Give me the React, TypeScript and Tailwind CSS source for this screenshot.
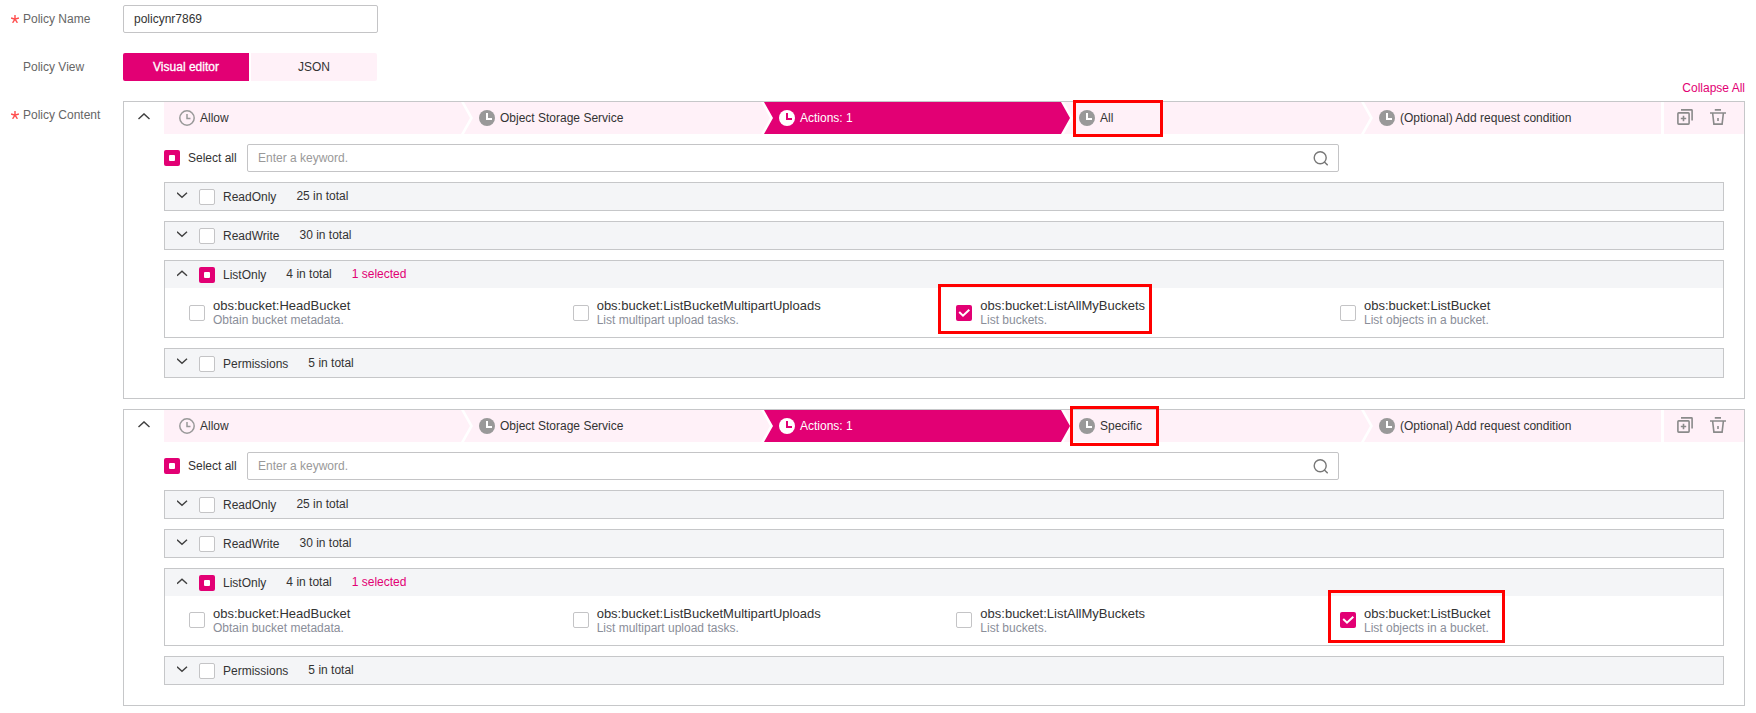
import type { ReactNode } from "react";

type Step = { label: string; variant: "outline" | "solid" | "active" };

function ClockOutline() {
  return (
    <svg className="size-4 shrink-0" viewBox="0 0 16 16" fill="none" stroke="#999" strokeWidth="1.5">
      <circle cx="8" cy="8" r="7.2" />
      <path d="M8 4v4.5h3.5" />
    </svg>
  );
}

function ClockSolid({ active }: { active: boolean }) {
  return (
    <svg className="size-4 shrink-0" viewBox="0 0 16 16" fill="none">
      <circle cx="8" cy="8" r="8" fill={active ? "#fff" : "#999"} />
      <path d="M8 3v6h5" stroke={active ? "#e20074" : "#fff"} strokeWidth="2" />
    </svg>
  );
}

function Chevron({ up = false, wide = false }: { up?: boolean; wide?: boolean }) {
  return (
    <svg
      className={wide ? "h-[7px] w-3 shrink-0" : "h-[7px] w-[11px] shrink-0"}
      viewBox={wide ? "0 0 12 7" : "0 0 11 7"}
      fill="none"
      stroke="#404040"
      strokeWidth="1.4"
    >
      {wide ? <path d="M0.5 6 6 0.9l5.5 5.1" /> : up ? <path d="M0 5.8 5 1.2l5 4.6" /> : <path d="M0 0.7l5 4.6 5-4.6" />}
    </svg>
  );
}

function CheckBox({ state = "off" }: { state?: "off" | "some" | "on" }) {
  if (state === "off") return <span className="size-4 shrink-0 rounded-[2px] border border-[#c4c4c6] bg-white" />;
  return (
    <span className="flex size-4 shrink-0 items-center justify-center rounded-[2px] bg-[#e20074]">
      {state === "some" ? (
        <span className="size-1.5 rounded-[1px] bg-white" />
      ) : (
        <svg className="size-4" viewBox="0 0 16 16" fill="none" stroke="#fff" strokeWidth="2">
          <path d="M3.2 7 7 10.7l6.3-6" />
        </svg>
      )}
    </span>
  );
}

function CopyIcon() {
  return (
    <svg className="size-4" viewBox="0 0 16 16" fill="none" stroke="#8a8a8a" strokeWidth="1.6">
      <rect x="0.9" y="3.9" width="11.2" height="11.2" rx="0.8" />
      <path d="M4 0.9h10.5q.6 0 .6.6v10M6.5 6.8v5.4M3.8 9.5h5.4" />
    </svg>
  );
}

function TrashIcon() {
  return (
    <svg className="size-4" viewBox="0 0 16 16" fill="none" stroke="#8a8a8a" strokeWidth="1.6">
      <path d="M4.8 0.9h6.2M0 4h16M2.6 4l1.3 11.1h8.2L13.4 4M8 9v3" />
    </svg>
  );
}

function StepBar({ steps }: { steps: Step[] }) {
  return (
    <div className="flex h-8 w-[1497px]">
      {steps.map((s, i) => {
        const shape =
          i === 0
            ? "w-[306px] -mr-1.5 [clip-path:polygon(0_0,297px_0,306px_50%,297px_100%,0_100%)]"
            : i === steps.length - 1
              ? "w-[297px] [clip-path:polygon(0_0,100%_0,100%_100%,0_100%,9px_50%)]"
              : "w-[306px] -mr-1.5 [clip-path:polygon(0_0,297px_0,306px_50%,297px_100%,0_100%,9px_50%)]";
        const tone = s.variant === "active" ? "bg-[#e20074] text-white" : "bg-[#fff1f8] text-[#333]";
        return (
          <div key={s.label} className={`flex shrink-0 items-center gap-[5px] pl-[15px] ${shape} ${tone}`}>
            {s.variant === "outline" ? <ClockOutline /> : <ClockSolid active={s.variant === "active"} />}
            <span>{s.label}</span>
          </div>
        );
      })}
    </div>
  );
}

function Group({
  name,
  total,
  selected,
  tall,
  children,
}: {
  name: string;
  total: number;
  selected?: number;
  tall?: boolean;
  children?: ReactNode;
}) {
  return (
    <div className="border border-[#c6c7c9]">
      <div className={`flex items-start bg-[#f4f5f7] pl-3 ${tall ? "h-7 pt-px" : "h-[27px]"}`}>
        <div className={tall ? "mt-2 flex" : "mt-[9px] flex"}>
          <Chevron up={!!children} />
        </div>
        <div className="mt-1.5 ml-[11px] flex h-4 items-center gap-2">
          <CheckBox state={selected ? "some" : "off"} />
          <span>{name}</span>
        </div>
        <span className="mt-[5px] ml-5 leading-4">{total} in total</span>
        {selected ? <span className="mt-[5px] ml-5 leading-4 text-[#e20074]">{selected} selected</span> : null}
      </div>
      {children}
    </div>
  );
}

const ACTIONS = [
  ["obs:bucket:HeadBucket", "Obtain bucket metadata."],
  ["obs:bucket:ListBucketMultipartUploads", "List multipart upload tasks."],
  ["obs:bucket:ListAllMyBuckets", "List buckets."],
  ["obs:bucket:ListBucket", "List objects in a bucket."],
];

function Statement({ resource, checked, first = false }: { resource: string; checked: number; first?: boolean }) {
  const steps: Step[] = [
    { label: "Allow", variant: "outline" },
    { label: "Object Storage Service", variant: "solid" },
    { label: "Actions: 1", variant: "active" },
    { label: resource, variant: "solid" },
    { label: "(Optional) Add request condition", variant: "solid" },
  ];
  return (
    <section className={`w-[1622px] border border-[#c6c7c9] ${first ? "h-[298px]" : "h-[297px]"}`}>
      <header className="flex h-8">
        <div className="w-10 pt-[11px] pl-3.5">
          <Chevron wide />
        </div>
        <StepBar steps={steps} />
        <div className="ml-[3px] flex w-20 items-start gap-[17px] bg-[#fff1f8] pt-[7px] pl-[13px]">
          <CopyIcon />
          <TrashIcon />
        </div>
      </header>
      <div className="ml-10 w-[1560px] pt-2.5">
        <div className="flex items-center">
          <CheckBox state="some" />
          <span className="ml-2 w-[59px]">Select all</span>
          <div className="flex h-7 w-[1092px] items-center justify-between rounded-[2px] border border-[#c4c4c6] px-2.5 text-[#999]">
            <span>Enter a keyword.</span>
            <svg className="size-[15px]" viewBox="0 0 15 15" fill="none" stroke="#777" strokeWidth="1.4">
              <circle cx="7.2" cy="6.8" r="6" />
              <path d="M11.2 10.8l3.5 3.5" />
            </svg>
          </div>
        </div>
        <div className="mt-2.5 flex flex-col gap-2.5">
          <Group name="ReadOnly" total={25} />
          <Group name="ReadWrite" total={30} />
          <Group name="ListOnly" total={4} selected={1}>
            <div className="ml-6 grid h-[49px] w-[1534.67px] grid-cols-4">
              {ACTIONS.map(([name, text], i) => (
                <div key={name} className="flex gap-2">
                  <div className={first ? "flex pt-[17px]" : "flex pt-4"}>
                    <CheckBox state={i === checked ? "on" : "off"} />
                  </div>
                  <div className="pt-2.5">
                    <div className="text-[13px] leading-[15px]">{name}</div>
                    <div className="leading-[14px] text-[#8a8e99]">{text}</div>
                  </div>
                </div>
              ))}
            </div>
          </Group>
          <Group name="Permissions" total={5} tall={first} />
        </div>
      </div>
    </section>
  );
}

function Label({ text, required = false }: { text: string; required?: boolean }) {
  return (
    <div className="flex w-[123px] shrink-0 pl-[11px] leading-4 text-[#666]">
      <svg className="mt-1 mr-1 size-2" viewBox="0 0 8 8" stroke={required ? "#ff4c4c" : "none"} strokeWidth="1.4">
        <path d="M4 0v4.2L0.1 3M4 4.2l3.9-1.2M4 4.2 1.6 7.8M4 4.2l2.4 3.6" fill="none" />
      </svg>
      <span>{text}</span>
    </div>
  );
}

export default function App() {
  return (
    <main className="relative h-[713px] w-[1756px] overflow-hidden bg-white pt-[5px] font-['Liberation_Sans',Arial,sans-serif] text-[12px] leading-4 text-[#333]">
      <div className="flex h-7 items-center">
        <Label text="Policy Name" required />
        <div className="flex h-7 w-[255px] items-center rounded-[2px] border border-[#c4c4c6] px-2.5">policynr7869</div>
      </div>
      <div className="mt-5 flex h-7 items-center">
        <Label text="Policy View" />
        <div className="flex gap-0.5 text-center leading-7">
          <div className="h-7 w-[126px] rounded-l-[2px] bg-[#e20074] text-white [-webkit-text-stroke:0.3px_#fff]">
            Visual editor
          </div>
          <div className="h-7 w-[126px] rounded-r-[2px] bg-[#fff1f8]">JSON</div>
        </div>
      </div>
      <div className="mr-[11px] flex h-5 items-end justify-end leading-4 text-[#e20074]">
        <span className="mb-[5px]">Collapse All</span>
      </div>
      <div className="flex items-start">
        <div className="pt-1.5">
          <Label text="Policy Content" required />
        </div>
        <div className="flex flex-col gap-2.5">
          <Statement resource="All" checked={2} first />
          <Statement resource="Specific" checked={3} />
        </div>
      </div>
      <div className="absolute top-[100px] left-[1073px] h-[37px] w-[90px] border-3 border-[#f00]" />
      <div className="absolute top-[284px] left-[938px] h-[50px] w-[214px] border-3 border-[#f00]" />
      <div className="absolute top-[406px] left-[1070px] h-10 w-[89px] border-3 border-[#f00]" />
      <div className="absolute top-[590px] left-[1328px] h-[53px] w-[177px] border-3 border-[#f00]" />
    </main>
  );
}
